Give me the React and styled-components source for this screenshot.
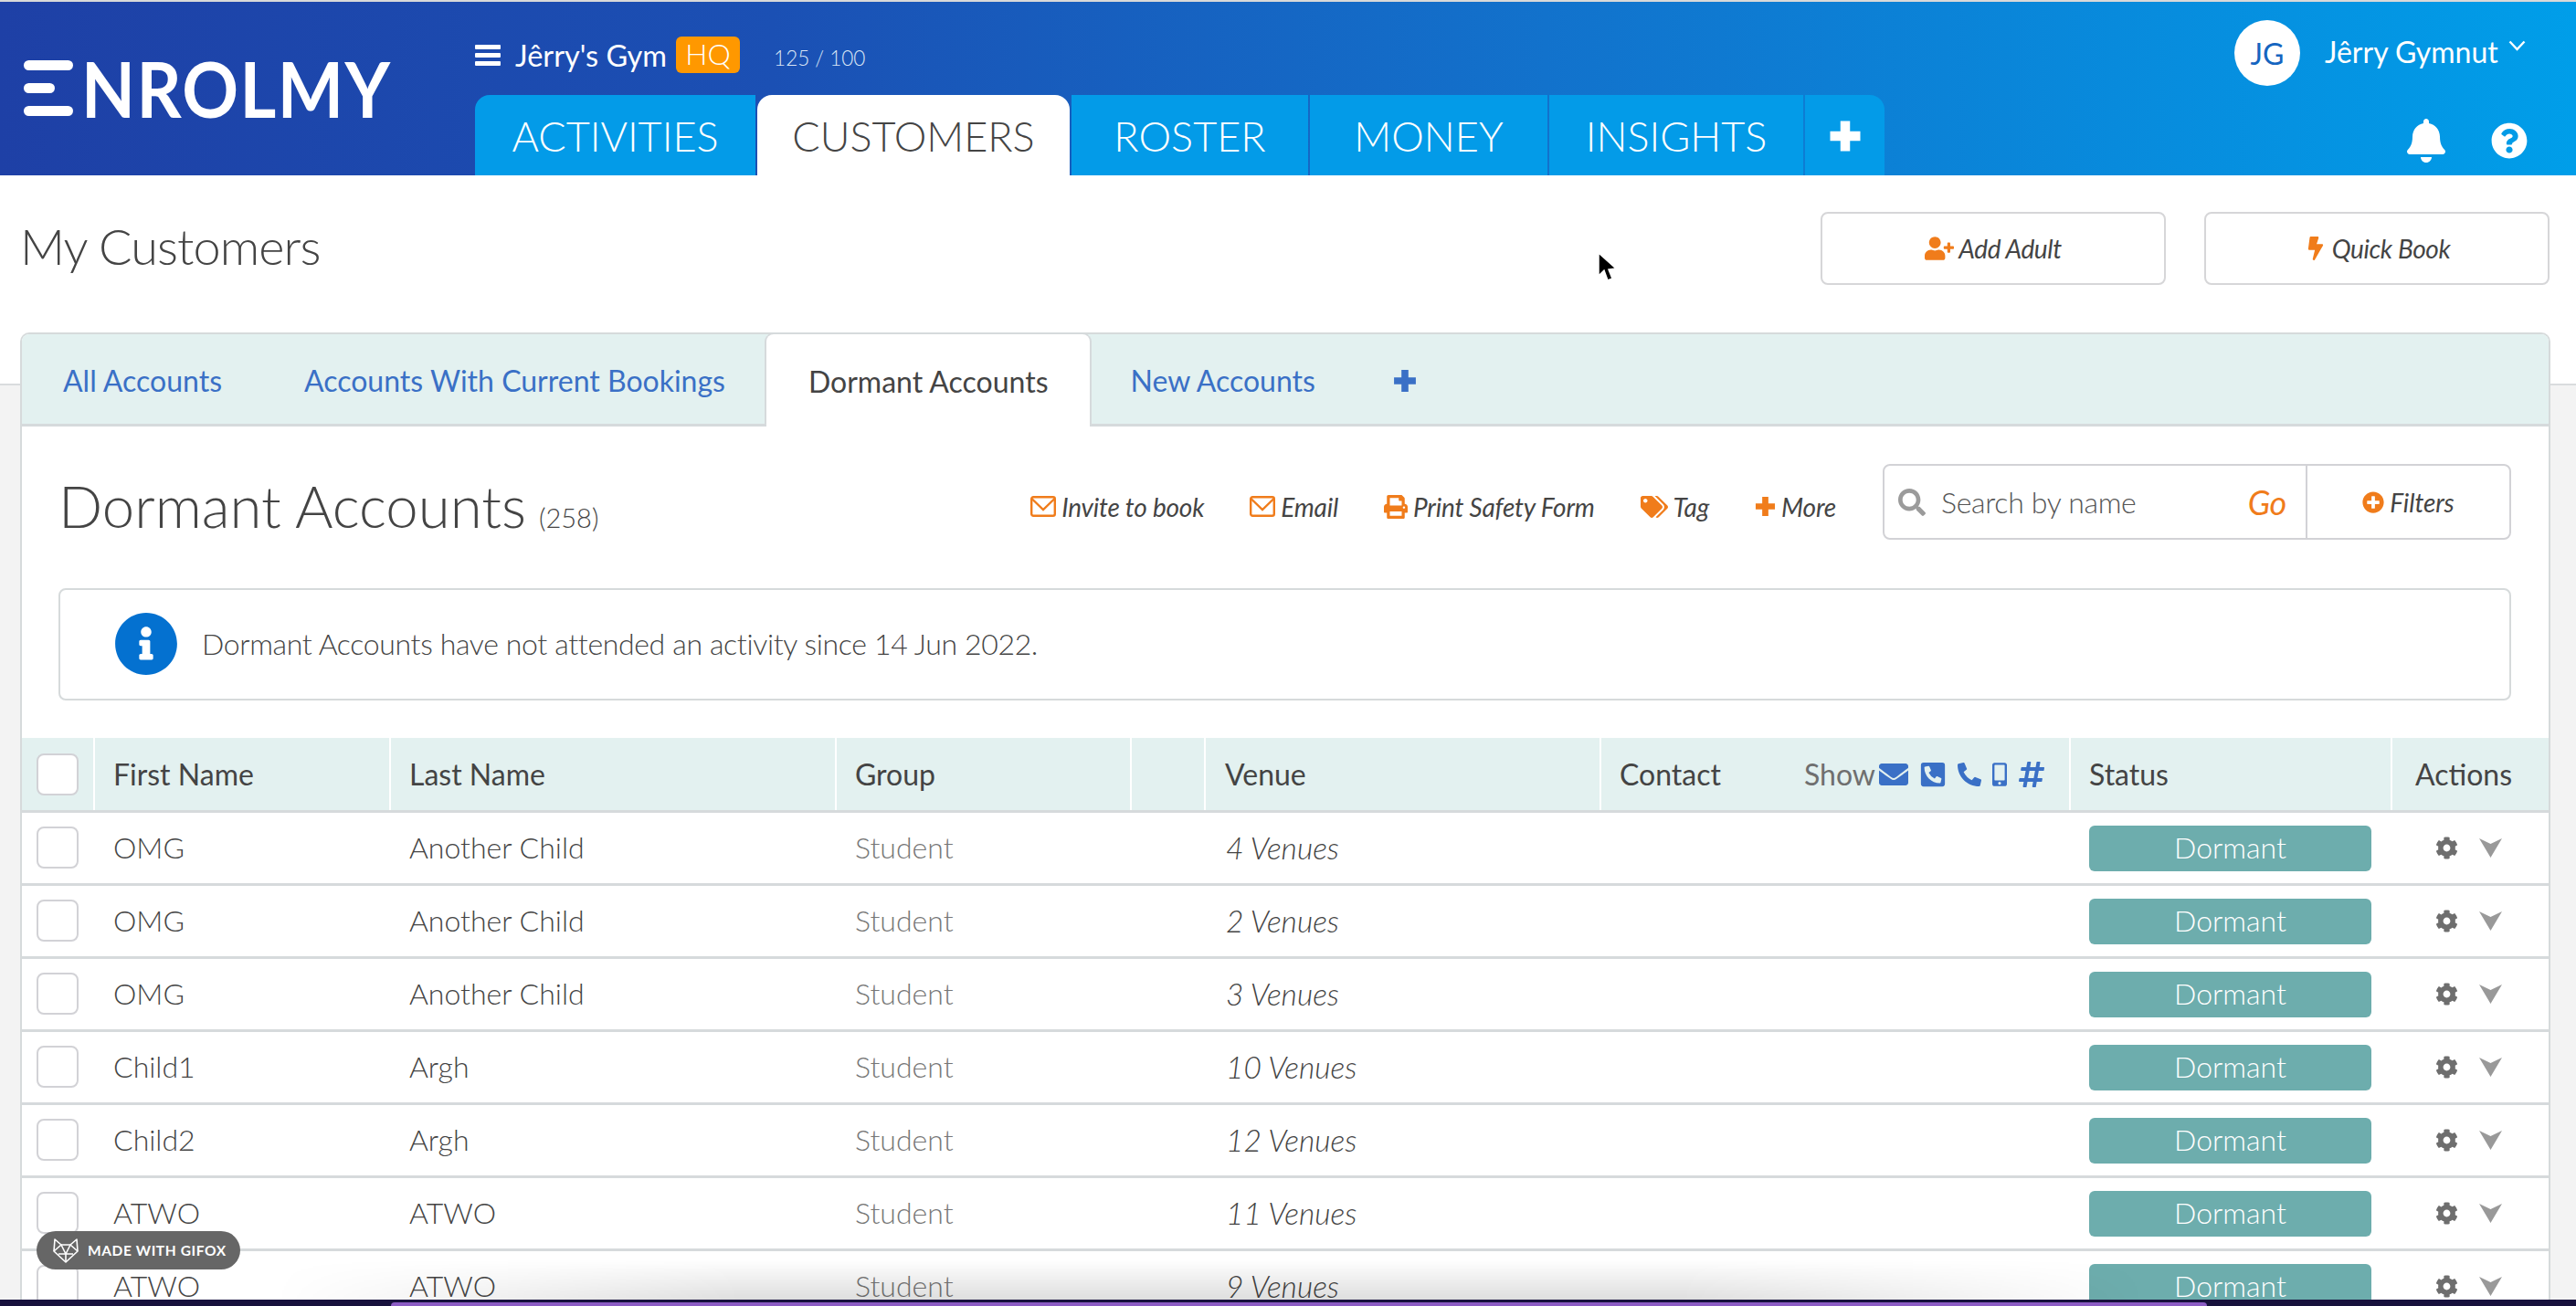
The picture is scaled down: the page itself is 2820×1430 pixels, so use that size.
import React from "react";
import styled, { createGlobalStyle } from "styled-components";
import {
  FaBell,
  FaQuestionCircle,
  FaUserPlus,
  FaBolt,
  FaPrint,
  FaTags,
  FaSearch,
  FaPlusCircle,
  FaEnvelope,
  FaPhoneSquareAlt,
  FaPhoneAlt,
  FaMobileAlt,
  FaHashtag,
  FaCog,
  FaInfoCircle,
} from "react-icons/fa";

const GlobalStyle = createGlobalStyle`
  html, body {
    margin: 0;
    padding: 0;
    background: #f3f3f3;
  }
  * {
    box-sizing: border-box;
  }
  body {
    font-family: Lato, "Open Sans", "Liberation Sans", sans-serif;
    color: #444;
  }
`;

const Page = styled.div`
  position: relative;
  width: 2820px;
  height: 1430px;
  overflow: hidden;
`;

/* header */
const Header = styled.header`
  height: 192px;
  border-top: 2px solid #d9d9d9;
  display: flex;
  background: linear-gradient(90deg, #1e40a6 0%, #1b50b4 30%, #1272cc 60%, #009ee9 100%);
`;

const LogoCol = styled.div`
  width: 520px;
  padding: 64px 0 0 26px;
  display: flex;
  align-items: flex-start;
  gap: 9px;
`;

const LogoBars = styled.div`
  width: 54px;
  height: 61px;
  display: flex;
  flex-direction: column;
  justify-content: space-between;
  align-items: flex-start;
`;

const LogoBar = styled.span`
  display: block;
  height: 11px;
  border-radius: 6px;
  background: #fff;
  width: ${(p) => p.$w}px;
`;

const LogoText = styled.div`
  font-size: 85px;
  line-height: 61px;
  height: 61px;
  font-weight: 700;
  color: #fff;
  letter-spacing: 1.6px;
  transform: scaleX(0.9);
  transform-origin: left center;
`;

const CenterCol = styled.div`
  flex: 1;
  display: flex;
  flex-direction: column;
`;

const GymRow = styled.div`
  height: 102px;
  padding-top: 14px;
  display: flex;
  align-items: center;
  color: #fff;
`;

const Burger = styled.div`
  width: 28px;
  height: 23px;
  margin-right: 16px;
  display: flex;
  flex-direction: column;
  justify-content: space-between;
  span {
    display: block;
    height: 5px;
    border-radius: 1px;
    background: #fff;
  }
`;

const GymName = styled.span`
  font-size: 32.5px;
  font-weight: 400;
`;

const HqBadge = styled.span`
  margin-left: 10px;
  width: 70px;
  height: 40px;
  line-height: 38px;
  text-align: center;
  background: #ff9800;
  border-radius: 6px;
  font-size: 32px;
  font-weight: 300;
`;

const Usage = styled.span`
  margin-left: 37px;
  margin-top: 6px;
  font-size: 22.5px;
  font-weight: 300;
  color: #dbe6f5;
`;

const MainNav = styled.nav`
  height: 88px;
  display: flex;
  gap: 2px;
`;

const NavTab = styled.div`
  width: ${(p) => p.$w}px;
  padding-top: 2px;
  display: flex;
  align-items: center;
  justify-content: center;
  font-size: 45px;
  font-weight: 300;
  color: ${(p) => (p.$active ? "#444" : "#fff")};
  background: ${(p) => (p.$active ? "#fff" : "#039be8")};
  border-top-left-radius: ${(p) => (p.$first || p.$active ? "16px" : "0")};
  border-top-right-radius: ${(p) => (p.$last || p.$active ? "16px" : "0")};
`;

const UserCol = styled.div`
  width: 374px;
  display: flex;
  flex-direction: column;
  color: #fff;
`;

const UserRow = styled.div`
  height: 102px;
  padding-top: 20px;
  display: flex;
  align-items: flex-start;
`;

const Avatar = styled.div`
  width: 72px;
  height: 72px;
  border-radius: 50%;
  background: #fff;
  color: #1565c0;
  font-size: 32px;
  font-weight: 400;
  display: flex;
  align-items: center;
  justify-content: center;
`;

const UserName = styled.div`
  margin-left: 27px;
  margin-top: 16px;
  font-size: 32px;
  line-height: 38px;
  display: flex;
  align-items: flex-start;
`;

const Caret = styled.svg`
  margin-left: 11px;
  margin-top: 6px;
`;

const NoticeIcons = styled.div`
  padding: 26px 0 0 186px;
  display: flex;
  align-items: center;
  gap: 47px;
  font-size: 40px;
`;

/* page top */
const Main = styled.main`
  background: linear-gradient(#fff 228px, #d9dcde 228px, #d9dcde 230px, #f3f3f3 230px);
  padding: 0 28px 0 22px;
`;

const TitleBar = styled.div`
  height: 172px;
  padding-top: 40px;
  display: flex;
  align-items: flex-start;
  justify-content: space-between;
`;

const PageTitle = styled.h1`
  margin: 2px 0 0 0;
  font-size: 54px;
  line-height: 72px;
  font-weight: 300;
  letter-spacing: -0.9px;
  color: #444;
`;

const TopButtons = styled.div`
  display: flex;
  gap: 42px;
  margin-right: 1px;
`;

const TopButton = styled.button`
  width: 378px;
  height: 80px;
  background: #fff;
  border: 2px solid #d6d6d8;
  border-radius: 8px;
  font-family: inherit;
  font-size: 28px;
  font-style: italic;
  letter-spacing: -0.4px;
  color: #444;
  display: flex;
  align-items: center;
  justify-content: center;
  gap: 5px;
  svg {
    color: #f07c1b;
  }
`;

/* card */
const Card = styled.section`
  background: #fff;
  border: 2px solid #d6dadb;
  border-bottom: 0;
  border-top-left-radius: 10px;
  border-top-right-radius: 10px;
`;

const TabStrip = styled.div`
  height: 101px;
  background: #e3f1f0;
  border-bottom: 3px solid #d6dadc;
  border-top-left-radius: 8px;
  border-top-right-radius: 8px;
  display: flex;
`;

const SubTab = styled.div`
  padding: ${(p) => (p.$active ? "1px" : "3px")} ${(p) => p.$pad || 45}px 0;
  height: ${(p) => (p.$active ? "101px" : "98px")};
  display: flex;
  align-items: center;
  font-size: 32px;
  font-weight: 400;
  color: ${(p) => (p.$active ? "#444" : "#3a70c6")};
  background: ${(p) => (p.$active ? "#fff" : "transparent")};
  border-top-left-radius: ${(p) => (p.$active ? "8px" : "0")};
  border-top-right-radius: ${(p) => (p.$active ? "8px" : "0")};
  box-shadow: ${(p) => (p.$active ? "-2px 0 0 #d6dadc, 2px 0 0 #d6dadc, 0 -2px 0 #d6dadc" : "none")};
`;

const ListHead = styled.div`
  height: 177px;
  padding: 41px 41px 0 40px;
  display: flex;
  align-items: flex-start;
`;

const ListTitle = styled.h2`
  margin: 4px 0 0;
  height: 83px;
  font-size: 63.5px;
  line-height: 83px;
  font-weight: 300;
  color: #444;
  small {
    margin-left: 14px;
    font-size: 29px;
    font-weight: 300;
  }
`;

const ActionBar = styled.div`
  margin: 5px 51px 0 auto;
  height: 83px;
  display: flex;
  gap: 50px;
`;

const ActionItem = styled.div`
  display: flex;
  align-items: center;
  gap: 6px;
  font-size: 28px;
  font-style: italic;
  font-weight: 400;
  letter-spacing: -0.2px;
  color: #444;
  svg {
    color: #f07c1b;
  }
`;

const SearchBox = styled.div`
  width: 688px;
  height: 83px;
  border: 2px solid #d2d2d6;
  border-radius: 8px;
  display: flex;
`;

const SearchField = styled.div`
  flex: 1;
  padding: 0 21px 0 15px;
  display: flex;
  align-items: center;
  border-right: 2px solid #d2d2d6;
  font-size: 32px;
  font-weight: 300;
  letter-spacing: -0.3px;
  color: #555;
  svg {
    color: #9b9b9b;
    margin-right: 17px;
  }
`;

const GoLabel = styled.span`
  margin-left: auto;
  font-size: 36px;
  font-style: italic;
  font-weight: 400;
  color: #f07c1b;
`;

const FiltersBtn = styled.div`
  width: 221px;
  display: flex;
  align-items: center;
  justify-content: center;
  gap: 6px;
  font-size: 28px;
  font-style: italic;
  letter-spacing: -0.1px;
  svg {
    color: #f07c1b;
  }
`;

const InfoBox = styled.div`
  margin: 0 41px 41px 40px;
  height: 123px;
  padding: 0 0 2px 59px;
  border: 2px solid #d6dadb;
  border-radius: 8px;
  display: flex;
  align-items: center;
  gap: 26px;
  font-size: 32px;
  font-weight: 300;
  letter-spacing: -0.35px;
  color: #444;
  svg {
    color: #0471d0;
  }
`;

/* table */
const columns = "78px 324px 488px 323px 81px 433px 514px 352px 1fr";

const HeadRow = styled.div`
  display: grid;
  grid-template-columns: ${columns};
  height: 82px;
  background: #e3f1f0;
  border-bottom: 3px solid #d6dadc;
`;

const HeadCell = styled.div`
  display: flex;
  align-items: center;
  padding-left: ${(p) => p.$pad ?? 20}px;
  border-left: ${(p) => (p.$noline ? "0" : "2px solid #fff")};
  font-size: 32px;
  font-weight: 400;
  color: #444;
`;

const ShowGroup = styled.div`
  margin-left: auto;
  margin-right: 26px;
  display: flex;
  align-items: center;
  color: #3a70c6;
  span {
    color: #6f6f6f;
    margin-right: 4px;
  }
  svg + svg {
    margin-left: 12px;
  }
`;

const MobileIcon = styled(FaMobileAlt)`
  width: 16px;
`;

const HashIcon = styled(FaHashtag)`
  width: 30px;
`;

const BodyRow = styled.div`
  display: grid;
  grid-template-columns: ${columns};
  height: 80px;
  border-bottom: 3px solid #d6dadc;
`;

const Cell = styled.div`
  display: flex;
  align-items: center;
  padding-left: ${(p) => p.$pad ?? 22}px;
  padding-bottom: 2px;
  font-size: ${(p) => (p.$italic ? "33.5px" : "32px")};
  font-weight: 300;
  font-style: ${(p) => (p.$italic ? "italic" : "normal")};
  color: ${(p) => (p.$muted ? "#777" : "#444")};
`;

const CheckBox = styled.span`
  display: block;
  width: 46px;
  height: 46px;
  background: #fff;
  border: 2px solid #d2d2d6;
  border-radius: 8px;
`;

const StatusBadge = styled.div`
  width: 309px;
  height: 50px;
  margin-top: 2px;
  padding-bottom: 2px;
  border-radius: 6px;
  background: #6dadad;
  color: #fff;
  font-size: 32px;
  font-weight: 300;
  display: flex;
  align-items: center;
  justify-content: center;
`;

const RowActions = styled.div`
  display: flex;
  align-items: center;
  gap: 23px;
  margin-top: 2px;
  color: #6e6e6e;
  svg + svg {
    color: #999;
  }
`;

/* things lying over the page */
const Pointer = styled.svg`
  position: absolute;
  left: 1748px;
  top: 275px;
`;

const BottomShade = styled.div`
  position: absolute;
  left: 300px;
  right: 470px;
  bottom: 7px;
  height: 44px;
  background: linear-gradient(180deg, rgba(0, 0, 0, 0), rgba(0, 0, 0, 0.13));
  mask-image: linear-gradient(90deg, transparent, #000 25%, #000 75%, transparent);
`;

const DockStrip = styled.div`
  position: absolute;
  left: 0;
  right: 0;
  bottom: 0;
  height: 7px;
  background: #17113d;
  display: flex;
  align-items: flex-end;
  padding: 0 404px 0 428px;
`;

const DockBar = styled.div`
  flex: 1;
  height: 4px;
  background: #8c5cc4;
  border-top-left-radius: 8px;
  border-top-right-radius: 8px;
`;

const GifoxBadge = styled.div`
  position: absolute;
  left: 40px;
  top: 1348px;
  width: 223px;
  height: 42px;
  border-radius: 21px;
  background: #666;
  color: #fff;
  display: flex;
  align-items: center;
  padding-left: 17px;
  gap: 9px;
  font-size: 15.5px;
  font-weight: 700;
  letter-spacing: 0.6px;
  white-space: nowrap;
`;

const MailOutline = () => (
  <svg width="28" height="23" viewBox="0 0 28 23" fill="none" stroke="currentColor" strokeWidth="2.4">
    <rect x="1.2" y="1.2" width="25.6" height="20.6" rx="2" />
    <path d="M1.5 3 L14 15 L26.5 3" />
  </svg>
);

const ArrowDown = () => (
  <svg width="25" height="21" viewBox="0 0 25 21" fill="currentColor">
    <path d="M0 0 L12.5 6 L25 0 L12.5 21 Z" />
  </svg>
);

const Plus = ({ size }) => (
  <svg width={size} height={size} viewBox="0 0 24 24" fill="none" stroke="currentColor" strokeWidth="7">
    <path d="M12 1 V23 M1 12 H23" />
  </svg>
);

const FoxMark = () => (
  <svg width="30" height="27" viewBox="0 0 30 27" fill="none" stroke="#fff" strokeWidth="1.6" strokeLinejoin="round">
    <path d="M3 1 L10 7 H20 L27 1 L28 14 L15 26 L2 14 Z" />
    <path d="M2 14 L10 7 L15 17 L20 7 L28 14 M15 17 V26 M7 17 L15 17 L23 17" />
  </svg>
);

const rows = [
  ["OMG", "Another Child", "4 Venues"],
  ["OMG", "Another Child", "2 Venues"],
  ["OMG", "Another Child", "3 Venues"],
  ["Child1", "Argh", "10 Venues"],
  ["Child2", "Argh", "12 Venues"],
  ["ATWO", "ATWO", "11 Venues"],
  ["ATWO", "ATWO", "9 Venues"],
];

const navTabs = [
  { label: "ACTIVITIES", w: 307, first: true },
  { label: "CUSTOMERS", w: 342, active: true },
  { label: "ROSTER", w: 259 },
  { label: "MONEY", w: 260 },
  { label: "INSIGHTS", w: 278 },
];

const App = () => {
  return (
    <Page>
      <GlobalStyle />
      <Header>
        <LogoCol>
          <LogoBars>
            <LogoBar $w={54} />
            <LogoBar $w={34} />
            <LogoBar $w={54} />
          </LogoBars>
          <LogoText>NROLMY</LogoText>
        </LogoCol>
        <CenterCol>
          <GymRow>
            <Burger>
              <span />
              <span />
              <span />
            </Burger>
            <GymName>Jêrry's Gym</GymName>
            <HqBadge>HQ</HqBadge>
            <Usage>125 / 100</Usage>
          </GymRow>
          <MainNav>
            {navTabs.map((tab) => (
              <NavTab key={tab.label} $w={tab.w} $first={tab.first} $active={tab.active}>
                {tab.label}
              </NavTab>
            ))}
            <NavTab $w={87} $last>
              <Plus size={36} />
            </NavTab>
          </MainNav>
        </CenterCol>
        <UserCol>
          <UserRow>
            <Avatar>JG</Avatar>
            <UserName>
              Jêrry Gymnut
              <Caret width="19" height="12" viewBox="0 0 19 12" fill="none" stroke="#fff" strokeWidth="2.4">
                <path d="M1.5 1.5 L9.5 10 L17.5 1.5" />
              </Caret>
            </UserName>
          </UserRow>
          <NoticeIcons>
            <FaBell size={48} />
            <FaQuestionCircle size={40} />
          </NoticeIcons>
        </UserCol>
      </Header>

      <Main>
        <TitleBar>
          <PageTitle>My Customers</PageTitle>
          <TopButtons>
            <TopButton>
              <FaUserPlus size={32} />
              Add Adult
            </TopButton>
            <TopButton>
              <FaBolt size={26} />
              Quick Book
            </TopButton>
          </TopButtons>
        </TitleBar>

        <Card>
          <TabStrip>
            <SubTab>All Accounts</SubTab>
            <SubTab>Accounts With Current Bookings</SubTab>
            <SubTab $active $pad={46}>Dormant Accounts</SubTab>
            <SubTab $pad={44}>New Accounts</SubTab>
            <SubTab $pad={41}>
              <Plus size={26} />
            </SubTab>
          </TabStrip>

          <ListHead>
            <ListTitle>
              Dormant Accounts<small>(258)</small>
            </ListTitle>
            <ActionBar>
              <ActionItem>
                <MailOutline />
                Invite to book
              </ActionItem>
              <ActionItem>
                <MailOutline />
                Email
              </ActionItem>
              <ActionItem>
                <FaPrint size={26} />
                Print Safety Form
              </ActionItem>
              <ActionItem>
                <FaTags size={30} />
                Tag
              </ActionItem>
              <ActionItem>
                <Plus size={23} />
                More
              </ActionItem>
            </ActionBar>
            <SearchBox>
              <SearchField>
                <FaSearch size={30} />
                Search by name
                <GoLabel>Go</GoLabel>
              </SearchField>
              <FiltersBtn>
                <FaPlusCircle size={24} />
                Filters
              </FiltersBtn>
            </SearchBox>
          </ListHead>

          <InfoBox>
            <FaInfoCircle size={70} />
            Dormant Accounts have not attended an activity since 14 Jun 2022.
          </InfoBox>

          <HeadRow>
            <HeadCell $pad={16} $noline>
              <CheckBox />
            </HeadCell>
            <HeadCell>First Name</HeadCell>
            <HeadCell>Last Name</HeadCell>
            <HeadCell>Group</HeadCell>
            <HeadCell />
            <HeadCell $pad={21}>Venue</HeadCell>
            <HeadCell>
              Contact
              <ShowGroup>
                <span>Show</span>
                <FaEnvelope size={32} />
                <FaPhoneSquareAlt size={30} />
                <FaPhoneAlt size={26} />
                <MobileIcon size={26} />
                <HashIcon size={32} />
              </ShowGroup>
            </HeadCell>
            <HeadCell>Status</HeadCell>
            <HeadCell $pad={25}>Actions</HeadCell>
          </HeadRow>

          {rows.map(([first, last, venues], i) => (
            <BodyRow key={i}>
              <Cell $pad={16}>
                <CheckBox />
              </Cell>
              <Cell>{first}</Cell>
              <Cell>{last}</Cell>
              <Cell $muted>Student</Cell>
              <Cell />
              <Cell $pad={24} $italic>{venues}</Cell>
              <Cell />
              <Cell>
                <StatusBadge>Dormant</StatusBadge>
              </Cell>
              <Cell $pad={49}>
                <RowActions>
                  <FaCog size={25} />
                  <ArrowDown />
                </RowActions>
              </Cell>
            </BodyRow>
          ))}
        </Card>
      </Main>

      <Pointer width="24" height="36" viewBox="0 0 24 36">
        <path d="M2 2 L2 27 L8 21 L12 32 L17 30 L13 20 L21 19 Z" fill="#000" stroke="#fff" strokeWidth="1.5" />
      </Pointer>
      <BottomShade />
      <GifoxBadge>
        <FoxMark />
        MADE WITH GIFOX
      </GifoxBadge>
      <DockStrip>
        <DockBar />
      </DockStrip>
    </Page>
  );
};

export default App;
